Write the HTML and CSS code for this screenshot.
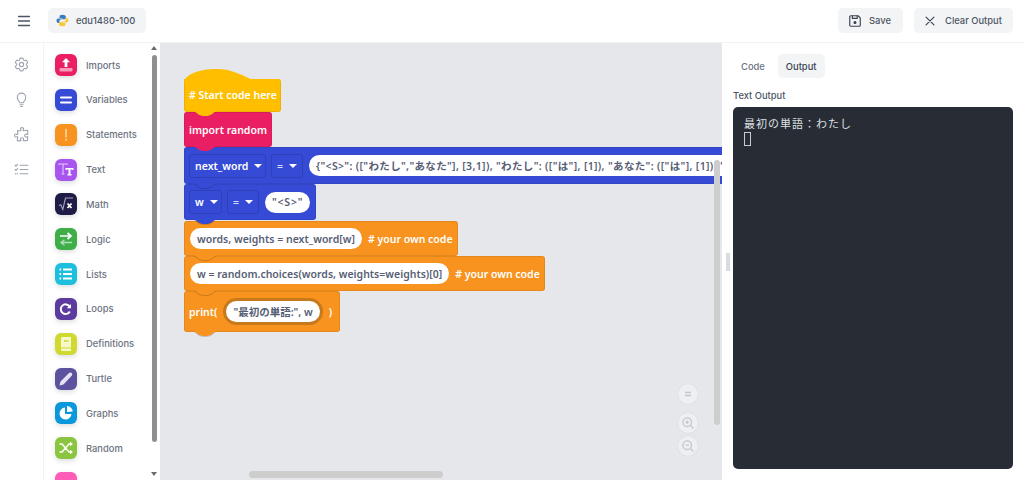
FILE: index.html
```html
<!DOCTYPE html>
<html lang="en">
<head>
<meta charset="utf-8">
<title>edu1480-100</title>
<link rel="stylesheet" href="styles.css">
</head>
<body>
<div class="app">
  <header class="topbar">
    <div class="topbar-left">
      <button class="menu" aria-label="Menu"><svg width="16" height="16" viewBox="0 0 16 16"><path d="M2.500 3.500h11M2.500 8h11M2.500 12.500h11" stroke="#4b5563" stroke-width="1.300" stroke-linecap="round" fill="none"/></svg></button>
      <div class="chip">
        <svg width="13" height="13" viewBox="0 0 16 16"><path d="M8 .8c-3 0-3.600 1.200-3.600 2.400V5H8v.6H2.900C1.500 5.600.6 6.700.6 8.200s.9 2.800 2.300 2.800h1.300V9c0-1.400 1.200-2.500 2.600-2.500h3.400c1 0 1.900-.9 1.900-1.900V3.200C12.100 1.700 10.600.8 8 .8Z" fill="#3b7cc0"/><path d="M8 15.200c3 0 3.600-1.200 3.600-2.400V11H8v-.6h5.100c1.400 0 2.300-1.100 2.300-2.600s-.9-2.800-2.300-2.800h-1.300V7c0 1.400-1.200 2.500-2.600 2.500H5.800c-1 0-1.900.9-1.900 1.900v1.400c0 1.500 1.500 2.400 4.100 2.400Z" fill="#f7c93e"/></svg>
        <span>edu1480-100</span>
      </div>
    </div>
    <div class="topbar-right">
      <button class="btn btn-save"><svg width="14" height="14" viewBox="0 0 16 16" fill="none" stroke="#374151" stroke-width="1.300" stroke-linejoin="round"><path d="M2 3.200C2 2.500 2.500 2 3.200 2h8.300L14 4.500v8.300c0 .7-.5 1.200-1.200 1.200H3.200C2.500 14 2 13.500 2 12.800Z"/><path d="M5 2v3h5.500V2"/><circle cx="8" cy="9.800" r="1.100" fill="#374151"/></svg><span>Save</span></button>
      <button class="btn btn-clear"><svg width="14" height="14" viewBox="0 0 16 16" fill="none" stroke="#374151" stroke-width="1.300" stroke-linecap="round"><path d="M3.500 3.500l9 9M12.500 3.500l-9 9"/></svg><span>Clear Output</span></button>
    </div>
  </header>
  <main class="main">
    <nav class="rail">
      <svg width="17" height="17" viewBox="0 0 24 24" fill="none" stroke="#9ca3af" stroke-width="1.500" stroke-linejoin="round"><path d="M9.594 3.940c.09-.542.56-.94 1.110-.94h2.593c.55 0 1.020.398 1.110.94l.213 1.281c.063.374.313.686.645.87.074.04.147.083.22.127.325.196.72.257 1.075.124l1.217-.456a1.125 1.125 0 0 1 1.370.49l1.296 2.247a1.125 1.125 0 0 1-.26 1.431l-1.003.827c-.293.241-.438.613-.43.992a7.723 7.723 0 0 1 0 .255c-.008.378.137.75.43.991l1.004.827c.424.35.534.955.26 1.430l-1.298 2.247a1.125 1.125 0 0 1-1.369.491l-1.217-.456c-.355-.133-.75-.072-1.076.124a6.470 6.470 0 0 1-.22.128c-.331.183-.581.495-.644.869l-.213 1.281c-.09.543-.56.94-1.110.94h-2.594c-.55 0-1.019-.398-1.110-.94l-.213-1.281c-.062-.374-.312-.686-.644-.87a6.520 6.520 0 0 1-.22-.127c-.325-.196-.72-.257-1.076-.124l-1.217.456a1.125 1.125 0 0 1-1.369-.49l-1.297-2.247a1.125 1.125 0 0 1 .26-1.431l1.004-.827c.292-.24.437-.613.43-.991a6.932 6.932 0 0 1 0-.255c.007-.38-.138-.751-.43-.992l-1.004-.827a1.125 1.125 0 0 1-.26-1.430l1.297-2.247a1.125 1.125 0 0 1 1.370-.491l1.216.456c.356.133.751.072 1.076-.124.072-.044.146-.086.22-.128.332-.183.582-.495.644-.869l.214-1.280Z"/><circle cx="12" cy="12" r="3"/></svg>
      <svg width="17" height="17" viewBox="0 0 24 24" fill="none" stroke="#9ca3af" stroke-width="1.500" stroke-linecap="round" stroke-linejoin="round"><path d="M9.500 16.500c0-1.500-3.500-3.500-3.500-7.500a6 6 0 0 1 12 0c0 4-3.500 6-3.500 7.500Z"/><path d="M9.800 19.500h4.400M10.800 22h2.400"/></svg>
      <svg width="17" height="17" viewBox="0 0 24 24" fill="none" stroke="#9ca3af" stroke-width="1.500" stroke-linejoin="round"><path d="M14.250 6.087c0-.355.186-.676.401-.959.221-.29.349-.634.349-1.003 0-1.036-1.007-1.875-2.250-1.875s-2.250.84-2.250 1.875c0 .369.128.713.349 1.003.215.283.401.604.401.959a.64.64 0 0 1-.657.643 48.390 48.390 0 0 1-4.163-.3c.186 1.613.293 3.250.315 4.907a.656.656 0 0 1-.658.663c-.355 0-.676-.186-.959-.401a1.647 1.647 0 0 0-1.003-.349c-1.036 0-1.875 1.007-1.875 2.250s.84 2.250 1.875 2.250c.369 0 .713-.128 1.003-.349.283-.215.604-.401.959-.401.31 0 .555.26.532.57a48.039 48.039 0 0 1-.642 5.056c1.518.19 3.058.309 4.616.354a.64.64 0 0 0 .657-.643c0-.355-.186-.676-.401-.959a1.647 1.647 0 0 1-.349-1.003c0-1.035 1.008-1.875 2.250-1.875 1.243 0 2.250.84 2.250 1.875 0 .369-.128.713-.349 1.003-.215.283-.4.604-.4.959 0 .333.277.599.61.58a48.100 48.100 0 0 0 5.427-.63 48.050 48.050 0 0 0 .582-4.717.532.532 0 0 0-.533-.57c-.355 0-.676.186-.959.401-.29.221-.634.349-1.003.349-1.035 0-1.875-1.007-1.875-2.250s.84-2.250 1.875-2.250c.37 0 .713.128 1.003.349.283.215.604.401.96.401a.656.656 0 0 0 .658-.663 48.422 48.422 0 0 0-.37-5.360c-1.886.342-3.810.574-5.766.689a.578.578 0 0 1-.61-.58Z"/></svg>
      <svg width="17" height="17" viewBox="0 0 24 24" fill="none" stroke="#9ca3af" stroke-width="1.500" stroke-linecap="round" stroke-linejoin="round"><path d="M10 6h11M10 12h11M10 18h11"/><path d="M3 6l1.200 1.200L6.500 4.800M3 12l1.200 1.200 2.300-2.400"/><path d="M3.500 18h.01M6 18h.01" stroke-width="2"/></svg>
    </nav>
    <aside class="toolbox">
      <div class="tool"><span class="ticon c-imports"><svg viewBox="0 0 22 22"><path d="M11 4l4 4.200h-2.600V13H9.600V8.200H7Z" fill="#fff"/><rect x="4.500" y="14" width="13" height="3.500" rx="1" fill="#fff" opacity=".55"/></svg></span><span>Imports</span></div>
      <div class="tool"><span class="ticon c-variables"><svg viewBox="0 0 22 22"><path d="M6 8.500h10M6 13.500h10" stroke="#fff" stroke-width="2" stroke-linecap="round"/></svg></span><span>Variables</span></div>
      <div class="tool"><span class="ticon c-statements"><svg viewBox="0 0 22 22"><path d="M11 5.500v7.500" stroke="#ffd9a8" stroke-width="1.600" stroke-linecap="round"/><circle cx="11" cy="15.800" r="1" fill="#ffd9a8"/></svg></span><span>Statements</span></div>
      <div class="tool"><span class="ticon c-text"><svg viewBox="0 0 22 22"><path d="M4 6V5h8v1M8 5v10M6.500 15h3" stroke="#e3c6ff" stroke-width="1.100" fill="none"/><path d="M10.500 9h8v2h-1l-.3-.6h-1.700V15h1v1.500h-4V15h1v-4.600h-1.700l-.3.6h-1Z" fill="#fff"/></svg></span><span>Text</span></div>
      <div class="tool"><span class="ticon c-math"><svg viewBox="0 0 22 22"><path d="M4 12.500l1.800-.8 2 4.800 2.700-11.500H18" stroke="#a6a6c4" stroke-width="1.100" fill="none"/><path d="M12.500 10.500l4 4.500M16.500 10.500l-4 4.500" stroke="#fff" stroke-width="1.800"/></svg></span><span>Math</span></div>
      <div class="tool"><span class="ticon c-logic"><svg viewBox="0 0 22 22"><path d="M5 8h10M12.500 5L16 8l-3.500 3" stroke="#fff" stroke-width="1.700" fill="none"/><path d="M17 14.500H7M9.500 11.800L6 14.500l3.500 2.700" stroke="#fff" stroke-width="1.300" opacity=".6" fill="none"/></svg></span><span>Logic</span></div>
      <div class="tool"><span class="ticon c-lists"><svg viewBox="0 0 22 22"><path d="M8 6.500h9M8 11h9M8 15.500h9" stroke="#fff" stroke-width="2"/><path d="M4.500 6.500h1.600M4.500 11h1.600M4.500 15.500h1.600" stroke="#fff" stroke-width="2"/></svg></span><span>Lists</span></div>
      <div class="tool"><span class="ticon c-loops"><svg viewBox="0 0 22 22"><path d="M14.800 13.500a4.800 4.800 0 1 1-.2-5" stroke="#fff" stroke-width="2" fill="none"/><path d="M16 6v4.200h-4.200Z" fill="#fff"/></svg></span><span>Loops</span></div>
      <div class="tool"><span class="ticon c-defs"><svg viewBox="0 0 22 22"><path d="M6 5.500C6 4.700 6.700 4 7.500 4H16v14H7.500C6.700 18 6 17.300 6 16.500Z" fill="#f6f8c9"/><path d="M9 8h4.500" stroke="#cfd92f" stroke-width="1.500"/><path d="M6 15h10" stroke="#cfd92f" stroke-width="1"/></svg></span><span>Definitions</span></div>
      <div class="tool"><span class="ticon c-turtle"><svg viewBox="0 0 22 22"><path d="M4.500 17.500l1-4L14 5c.8-.8 2-.8 2.700 0 .7.700.7 1.900 0 2.700L8.500 16.500Z" fill="#e6e3f4"/></svg></span><span>Turtle</span></div>
      <div class="tool"><span class="ticon c-graphs"><svg viewBox="0 0 22 22"><path d="M10 5.500a6 6 0 1 0 6.500 6.500H10Z" fill="#fff"/><path d="M12 4a6 6 0 0 1 5.800 5.500l-5.800.5Z" fill="#fff"/></svg></span><span>Graphs</span></div>
      <div class="tool"><span class="ticon c-random"><svg viewBox="0 0 22 22"><path d="M4.500 7H7l7 8h1.500M4.500 15H7l7-8h1.500" stroke="#fff" stroke-width="1.400" fill="none"/><path d="M15 4.800L18 7l-3 2.200ZM15 12.800l3 2.200-3 2.200Z" fill="#fff"/></svg></span><span>Random</span></div>
      <div class="tool"><span class="ticon c-last"></span><span></span></div>
      <div class="tb-arrow tb-up"></div>
      <div class="tb-thumb"></div>
      <div class="tb-arrow tb-down"></div>
    </aside>
    <section class="workspace">
      <div class="stack">
        <div class="block hat"><span class="lbl"># Start code here</span></div>
        <div class="block import"><span class="lbl">import random</span></div>
        <div class="block blue b-next">
          <span class="dd dd-next">next_word<i class="caret"></i></span>
          <span class="dd dd-eq">=<i class="caret"></i></span>
          <span class="pill pill-long">{"&lt;S&gt;": (["わたし","あなた"], [3,1]), "わたし": (["は"], [1]), "あなた": (["は"], [1]), "</span>
        </div>
        <div class="block blue b-w">
          <span class="dd dd-w">w<i class="caret"></i></span>
          <span class="dd dd-eq">=<i class="caret"></i></span>
          <span class="pill pill-s">"&lt;S&gt;"</span>
        </div>
        <div class="block orange b-words">
          <span class="pill">words, weights = next_word[w]</span>
          <span class="lbl"># your own code</span>
        </div>
        <div class="block orange b-choices">
          <span class="pill">w = random.choices(words, weights=weights)[0]</span>
          <span class="lbl"># your own code</span>
        </div>
        <div class="block orange b-print">
          <span class="lbl">print(</span>
          <span class="pill pill-ring">"最初の単語:", w</span>
          <span class="lbl">)</span>
        </div>
      </div>
      <div class="ws-vbar"></div>
      <div class="ws-hbar"></div>
      <div class="zoomctl">
        <span class="zbtn z-reset"><svg width="12" height="12" viewBox="0 0 12 12"><path d="M3 4.500h6M3 7.500h6" stroke="#c3c6cc" stroke-width="1.300"/></svg></span>
        <span class="zbtn"><svg width="14" height="14" viewBox="0 0 14 14" fill="none" stroke="#c3c6cc" stroke-width="1.300"><circle cx="6.200" cy="6.200" r="4.300"/><path d="M9.500 9.500l3 3M4.500 6.200h3.400M6.200 4.500v3.400"/></svg></span>
        <span class="zbtn"><svg width="14" height="14" viewBox="0 0 14 14" fill="none" stroke="#c3c6cc" stroke-width="1.300"><circle cx="6.200" cy="6.200" r="4.300"/><path d="M9.500 9.500l3 3M4.500 6.200h3.400"/></svg></span>
      </div>
    </section>
    <section class="panel">
      <span class="grip"></span>
      <div class="tabs">
        <span class="tab">Code</span>
        <span class="tab tab-on">Output</span>
      </div>
      <h2 class="out-title">Text Output</h2>
      <div class="console">
        <div class="console-line">最初の単語：わたし</div>
        <div class="cursor"></div>
      </div>
    </section>
  </main>
</div>
</body>
</html>
```

FILE: styles.css
```css
* { box-sizing: border-box; }
html, body { margin: 0; height: 100%; overflow: hidden; background: #fff; }
body { font-family: Inter, "Noto Sans CJK JP", sans-serif; }
button { font: inherit; border: 0; background: none; padding: 0; }

.app { width: 1024px; height: 480px; display: flex; flex-direction: column; overflow: hidden; }

.topbar { height: 43px; flex: none; display: flex; align-items: center; justify-content: space-between; padding: 0 11px 1px 16px; border-bottom: 1px solid #f1f2f4; }
.topbar-left, .topbar-right { display: flex; align-items: center; }
.topbar-right { gap: 11px; }
.menu { display: flex; margin-right: 16px; }
.chip { display: flex; align-items: center; gap: 7px; height: 25px; width: 98px; padding-left: 8px; border-radius: 5px; background: #f3f4f6; font-size: 9.400px; font-weight: 500; color: #4b5563; }
.btn { display: flex; align-items: center; height: 25px; border-radius: 5px; background: #f3f4f6; font-size: 9.400px; font-weight: 500; color: #4b5563; }
.btn-save { width: 65px; padding-left: 10px; gap: 7px; }
.btn-clear { width: 99px; padding-left: 9px; gap: 8px; }

.main { flex: 1; display: flex; min-height: 0; }

.rail { width: 44px; flex: none; display: flex; flex-direction: column; align-items: center; gap: 18px; padding: 13px 1px 0 0; border-right: 1px solid #f1f2f4; }

.toolbox { width: 116px; flex: none; position: relative; overflow: hidden; padding: 11px 0 0 11px; display: flex; flex-direction: column; gap: 12.850px; }
.tool { display: flex; align-items: center; gap: 9px; height: 22px; flex: none; font-size: 9.400px; font-weight: 500; color: #6b7280; }
.ticon { width: 22px; height: 22px; flex: none; border-radius: 6px; box-shadow: 0 2px 5px rgba(60, 64, 80, .18); display: block; }
.ticon svg { display: block; width: 22px; height: 22px; }
.c-imports { background: #e91e63; }
.c-variables { background: #354bd6; }
.c-statements { background: #f7931e; }
.c-text { background: #a855f0; }
.c-math { background: #1e1b45; }
.c-logic { background: #3fae49; }
.c-lists { background: #1cc0de; }
.c-loops { background: #5d3b9e; }
.c-defs { background: #cfd92f; }
.c-turtle { background: #5c539f; }
.c-graphs { background: #0a97dc; }
.c-random { background: #8bc540; }
.c-last { background: #ff5cb8; }

.tb-thumb { position: absolute; left: 108px; top: 12px; width: 5px; height: 387px; border-radius: 3px; background: #8f8f8f; }
.tb-arrow { position: absolute; left: 107px; width: 0; height: 0; border-left: 3.500px solid transparent; border-right: 3.500px solid transparent; }
.tb-up { top: 3px; border-bottom: 4px solid #6b6b6b; }
.tb-down { top: 429px; border-top: 4px solid #6b6b6b; }

.workspace { width: 562px; flex: none; position: relative; overflow: hidden; background: #e5e7eb; padding: 26px 0 0 24px; }
.stack { display: flex; flex-direction: column; font-family: "Noto Sans", "Noto Sans CJK JP", sans-serif; font-size: 10.500px; font-weight: 600; }

.block { position: relative; display: flex; align-items: center; flex: none; width: max-content; border: 1px solid rgba(0, 0, 0, .07); border-radius: 3px; color: #fff; }
.block::after { content: ""; position: absolute; left: 9px; top: 100%; width: 22px; height: 5px; background: inherit; clip-path: polygon(0 0, 100% 0, 78% 75%, 62% 100%, 38% 100%, 22% 75%); }
.blue::before, .orange::before { content: ""; position: absolute; left: 9px; top: calc(100% + 1px); width: 22px; height: 5px; background: rgba(0, 0, 0, .16); clip-path: polygon(0 0, 100% 0, 78% 75%, 62% 100%, 38% 100%, 22% 75%); }
.stack .block:nth-child(1) { z-index: 7; }
.stack .block:nth-child(2) { z-index: 6; }
.stack .block:nth-child(3) { z-index: 5; }
.stack .block:nth-child(4) { z-index: 4; }
.stack .block:nth-child(5) { z-index: 3; }
.stack .block:nth-child(6) { z-index: 2; }
.stack .block:nth-child(7) { z-index: 1; }

.hat { background: #ffbf00; height: 33px; width: 97px; margin-top: 10px; padding-left: 4px; border-top: 0; border-top-left-radius: 0; }
.hat::before { content: ""; position: absolute; left: -1px; top: -11px; width: 68px; height: 14px; background: inherit; clip-path: path("M0 14 C1 7 14 1 33 1 C46 1 56 6 67 11 L67 14 Z"); }
.import { background: #e91e63; height: 35px; width: 88px; padding: 1px 0 0 4px; }
.blue { background: #354bd6; }
.orange { background: #f7931e; }
.b-next { height: 37px; width: 640px; padding-left: 4px; gap: 5px; }
.b-w { height: 36px; width: 132px; padding-left: 4px; gap: 5px; }
.b-words { height: 35px; width: 274px; padding-left: 5px; gap: 6px; margin-top: 1px; }
.b-choices { height: 35px; width: 361px; padding-left: 5px; gap: 6px; }
.b-print { height: 41px; width: 156px; padding-left: 4px; gap: 6px; }
.lbl { white-space: nowrap; }

.dd { display: flex; align-items: center; height: 24px; border-radius: 3px; border: 1px solid rgba(0, 0, 0, .14); padding-left: 5px; gap: 6px; white-space: nowrap; }
.dd-next { width: 77px; }
.dd-eq { width: 32px; color: #d6dbf7; }
.dd-w { width: 33px; }
.caret { display: block; width: 0; height: 0; border-left: 4px solid transparent; border-right: 4px solid transparent; border-top: 4.500px solid #fff; }

.pill { display: flex; align-items: center; height: 21px; padding: 0 7px; border-radius: 11px; background: #fff; color: #575e75; white-space: nowrap; }
.pill-long { margin-left: 1px; letter-spacing: .35px; }
.pill-s { margin-left: 1px; letter-spacing: .8px; }
.pill-ring { height: 27px; padding: 0 7px; border-radius: 14px; border: 3px solid #c77a1c; }

.ws-vbar { position: absolute; z-index: 9; left: 554px; top: 117px; width: 6px; height: 265px; border-radius: 3px; background: #cdcdcd; }
.ws-hbar { position: absolute; z-index: 9; left: 89px; top: 428px; width: 194px; height: 7px; border-radius: 4px; background: #cdcdcd; }
.zoomctl { position: absolute; z-index: 9; left: 518px; top: 341px; display: flex; flex-direction: column; align-items: center; gap: 3px; }
.zbtn { width: 20px; height: 20px; border-radius: 50%; background: #eeeff2; display: flex; align-items: center; justify-content: center; box-shadow: 0 0 2px rgba(0, 0, 0, .08); }
.z-reset { margin-bottom: 6px; }

.panel { flex: 1; position: relative; display: flex; flex-direction: column; padding: 11px; }
.grip { position: absolute; left: 4px; top: 210px; width: 2px; height: 18px; background: #d9dbe0; box-shadow: 2px 0 0 #d9dbe0; }
.tabs { display: flex; gap: 5px; height: 24px; flex: none; }
.tab { display: flex; align-items: center; padding: 0 8px; border-radius: 5px; font-size: 9.400px; font-weight: 500; color: #6b7280; }
.tab-on { background: #f3f4f6; color: #374151; }
.out-title { margin: 11px 0 5px; font-size: 9.400px; line-height: 13px; font-weight: 500; color: #4b5563; }
.console { flex: 1; border-radius: 5px; background: #282c34; padding: 7px 11px 0; font-family: "Noto Sans CJK JP", monospace; font-size: 11px; letter-spacing: 1px; line-height: 18px; color: #dfe1e5; }
.cursor { width: 7px; height: 14px; border: 1px solid #c9ccd2; }
```
